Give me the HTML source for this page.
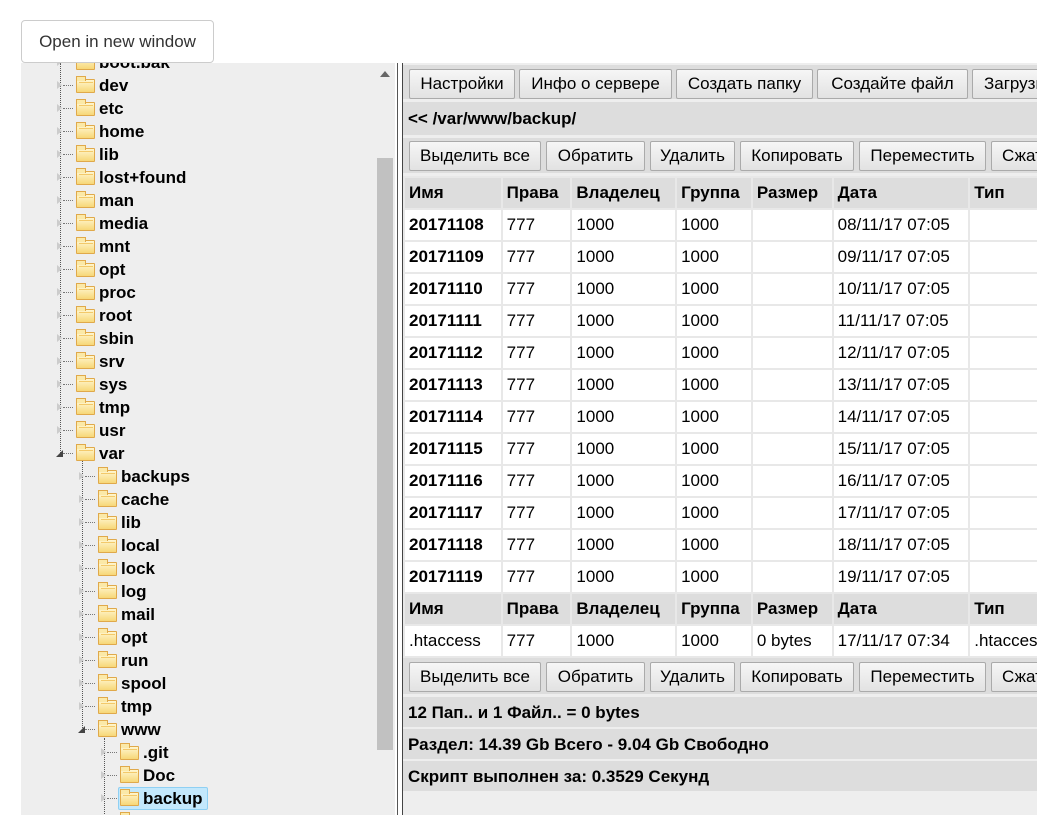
<!DOCTYPE html>
<html><head><meta charset="utf-8"><style>
*{margin:0;padding:0;box-sizing:border-box}
body{width:1037px;height:815px;background:#fff;position:relative;overflow:hidden;font-family:"Liberation Sans",Arial,sans-serif;color:#000}
.abs{position:absolute}
#open{left:21px;top:20px;width:193px;height:43px;border:1px solid #ccc;border-radius:4px;background:#fff;font-size:17px;line-height:41px;text-align:center;color:#333;z-index:5}
#tree{left:21px;top:63px;width:354px;height:752px;background:#eee;overflow:hidden}
.it{position:absolute;height:23px;font-weight:bold;font-size:17px;line-height:23px;white-space:nowrap}
.fd{position:absolute;width:19px;height:14px;top:5px;border:1px solid #e0a94a;border-radius:1px;background:linear-gradient(#fff6cf,#f7d777)}
.fd:before{content:"";position:absolute;left:-1px;top:-4px;width:8px;height:4px;border:1px solid #e0a94a;border-bottom:none;background:#fbe9a8}
.fd:after{content:"";position:absolute;left:2px;top:2px;width:14px;height:2px;border-top:1px solid #f3c96a}
.hl{position:absolute;top:11px;height:1px;border-top:1px dotted #777}
.tri{position:absolute;top:7px;width:0;height:0;border-top:4px solid transparent;border-bottom:4px solid transparent;border-left:5px solid #ccc}
.vl{position:absolute;width:1px;border-left:1px dotted #555}
#sb{left:375px;top:63px;width:20px;height:752px;background:#eee}
#thumb{left:377px;top:158px;width:16px;height:592px;background:#c1c1c1}
#right{left:402px;top:63px;width:635px;height:752px;background:#eee;border-left:1px solid #444}
.row{position:absolute;left:403px;width:634px;background:#ddd;border-bottom:2px solid #eee}
.btn{position:absolute;height:30px;border:1px solid #aaa;border-radius:2px;background:linear-gradient(#f6f6f6,#e2e2e2);font-size:17px;line-height:28px;text-align:center;white-space:nowrap;overflow:hidden}
table{position:absolute;left:403px;border-collapse:collapse;font-size:17px}
td{height:32px;border:2px solid #e8e8e8;padding:0 0 0 4px;white-space:nowrap;background:#fff}
tr.h td{background:#ddd;font-weight:bold}
td:first-child{font-weight:bold}
.st{position:absolute;left:403px;width:634px;height:32px;background:#ddd;border-bottom:2px solid #eee;font-weight:bold;font-size:17px;line-height:31px;padding-left:5px}
</style></head><body>
<div id="open" class="abs">Open in new window</div>
<div id="tree" class="abs">
<div class="vl" style="left:39px;top:0;height:390px"></div>
<div class="vl" style="left:61px;top:397px;height:270px"></div>
<div class="vl" style="left:83px;top:675px;height:80px"></div>
</div>
<div id="sb" class="abs"><div style="position:absolute;left:5px;top:8px;border-left:5px solid transparent;border-right:5px solid transparent;border-bottom:6px solid #666"></div></div>
<div id="thumb" class="abs"></div>
<div class="abs" style="left:397px;top:63px;width:1px;height:752px;background:#555"></div>
<div id="right" class="abs"></div>

<div class="row" style="top:65px;height:36px"></div>
<div class="btn" style="left:409px;top:69px;width:106px">Настройки</div>
<div class="btn" style="left:519px;top:69px;width:153px">Инфо о сервере</div>
<div class="btn" style="left:676px;top:69px;width:137px">Создать папку</div>
<div class="btn" style="left:817px;top:69px;width:151px">Создайте файл</div>
<div class="btn" style="left:972px;top:69px;width:80px;text-align:left;padding-left:11px">Загрузить</div>
<div class="row" style="top:102px;height:35px;font-weight:bold;font-size:17px;line-height:34px;padding-left:5px">&lt;&lt; /var/www/backup/</div>
<div class="row" style="top:138px;height:37px"></div>
<div class="btn" style="left:409px;top:141px;width:132px">Выделить все</div>
<div class="btn" style="left:546px;top:141px;width:99px">Обратить</div>
<div class="btn" style="left:650px;top:141px;width:85px">Удалить</div>
<div class="btn" style="left:740px;top:141px;width:114px">Копировать</div>
<div class="btn" style="left:859px;top:141px;width:127px">Переместить</div>
<div class="btn" style="left:991px;top:141px;width:60px;text-align:left;padding-left:10px">Сжать</div>

<table style="top:176px;width:660px">
<colgroup><col style="width:98px"><col style="width:70px"><col style="width:105px"><col style="width:76px"><col style="width:81px"><col style="width:137px"><col style="width:93px"></colgroup>
<tr class="h"><td>Имя</td><td>Права</td><td>Владелец</td><td>Группа</td><td>Размер</td><td>Дата</td><td>Тип</td></tr>
<tr><td>20171108</td><td>777</td><td>1000</td><td>1000</td><td></td><td>08/11/17 07:05</td><td></td></tr>
<tr><td>20171109</td><td>777</td><td>1000</td><td>1000</td><td></td><td>09/11/17 07:05</td><td></td></tr>
<tr><td>20171110</td><td>777</td><td>1000</td><td>1000</td><td></td><td>10/11/17 07:05</td><td></td></tr>
<tr><td>20171111</td><td>777</td><td>1000</td><td>1000</td><td></td><td>11/11/17 07:05</td><td></td></tr>
<tr><td>20171112</td><td>777</td><td>1000</td><td>1000</td><td></td><td>12/11/17 07:05</td><td></td></tr>
<tr><td>20171113</td><td>777</td><td>1000</td><td>1000</td><td></td><td>13/11/17 07:05</td><td></td></tr>
<tr><td>20171114</td><td>777</td><td>1000</td><td>1000</td><td></td><td>14/11/17 07:05</td><td></td></tr>
<tr><td>20171115</td><td>777</td><td>1000</td><td>1000</td><td></td><td>15/11/17 07:05</td><td></td></tr>
<tr><td>20171116</td><td>777</td><td>1000</td><td>1000</td><td></td><td>16/11/17 07:05</td><td></td></tr>
<tr><td>20171117</td><td>777</td><td>1000</td><td>1000</td><td></td><td>17/11/17 07:05</td><td></td></tr>
<tr><td>20171118</td><td>777</td><td>1000</td><td>1000</td><td></td><td>18/11/17 07:05</td><td></td></tr>
<tr><td>20171119</td><td>777</td><td>1000</td><td>1000</td><td></td><td>19/11/17 07:05</td><td></td></tr>
<tr class="h"><td>Имя</td><td>Права</td><td>Владелец</td><td>Группа</td><td>Размер</td><td>Дата</td><td>Тип</td></tr>
<tr><td style="font-weight:normal">.htaccess</td><td>777</td><td>1000</td><td>1000</td><td>0 bytes</td><td>17/11/17 07:34</td><td>.htaccess</td></tr>
</table>

<div class="row" style="top:658px;height:38px"></div>
<div class="btn" style="left:409px;top:662px;width:132px">Выделить все</div>
<div class="btn" style="left:546px;top:662px;width:99px">Обратить</div>
<div class="btn" style="left:650px;top:662px;width:85px">Удалить</div>
<div class="btn" style="left:740px;top:662px;width:114px">Копировать</div>
<div class="btn" style="left:859px;top:662px;width:127px">Переместить</div>
<div class="btn" style="left:991px;top:662px;width:60px;text-align:left;padding-left:10px">Сжать</div>
<div class="st" style="top:697px">12 Пап.. и 1 Файл.. = 0 bytes</div>
<div class="st" style="top:729px">Раздел: 14.39 Gb Всего - 9.04 Gb Свободно</div>
<div class="st" style="top:761px">Скрипт выполнен за: 0.3529 Секунд</div>

<script>
var t=document.getElementById('tree');
var items=[["boot.bak",1],["dev",1],["etc",1],["home",1],["lib",1],["lost+found",1],["man",1],["media",1],["mnt",1],["opt",1],["proc",1],["root",1],["sbin",1],["srv",1],["sys",1],["tmp",1],["usr",1],["var",1,1],["backups",2],["cache",2],["lib",2],["local",2],["lock",2],["log",2],["mail",2],["opt",2],["run",2],["spool",2],["tmp",2],["www",2,1],[".git",3],["Doc",3],["backup",3,0,1],["html",3]];
var h='';
items.forEach(function(a,i){
 var cy=62+23*i-63, top=cy-11, off=(a[1]-1)*22;
 var tl=36+off;
 h+='<div class="it" style="left:0;top:'+top+'px;width:354px">';
 if(a[2]) h+='<div style="position:absolute;left:'+(tl-1)+'px;top:8px;border-left:7px solid transparent;border-bottom:7px solid #444"></div>';
 else h+='<div class="tri" style="left:'+tl+'px"></div>';
 h+='<div class="hl" style="left:'+(tl+6)+'px;width:10px"></div>';
 if(a[3]) h+='<div style="position:absolute;left:'+(tl+17)+'px;top:0;width:90px;height:23px;background:#c3e8fc;border:1px solid #8fd0f3;border-radius:2px"></div>';
 h+='<div class="fd" style="left:'+(tl+19)+'px"></div>';
 h+='<span style="position:absolute;left:'+(78+off)+'px;top:0">'+a[0]+'</span></div>';
});
t.insertAdjacentHTML('beforeend',h);
</script>
</body></html>
